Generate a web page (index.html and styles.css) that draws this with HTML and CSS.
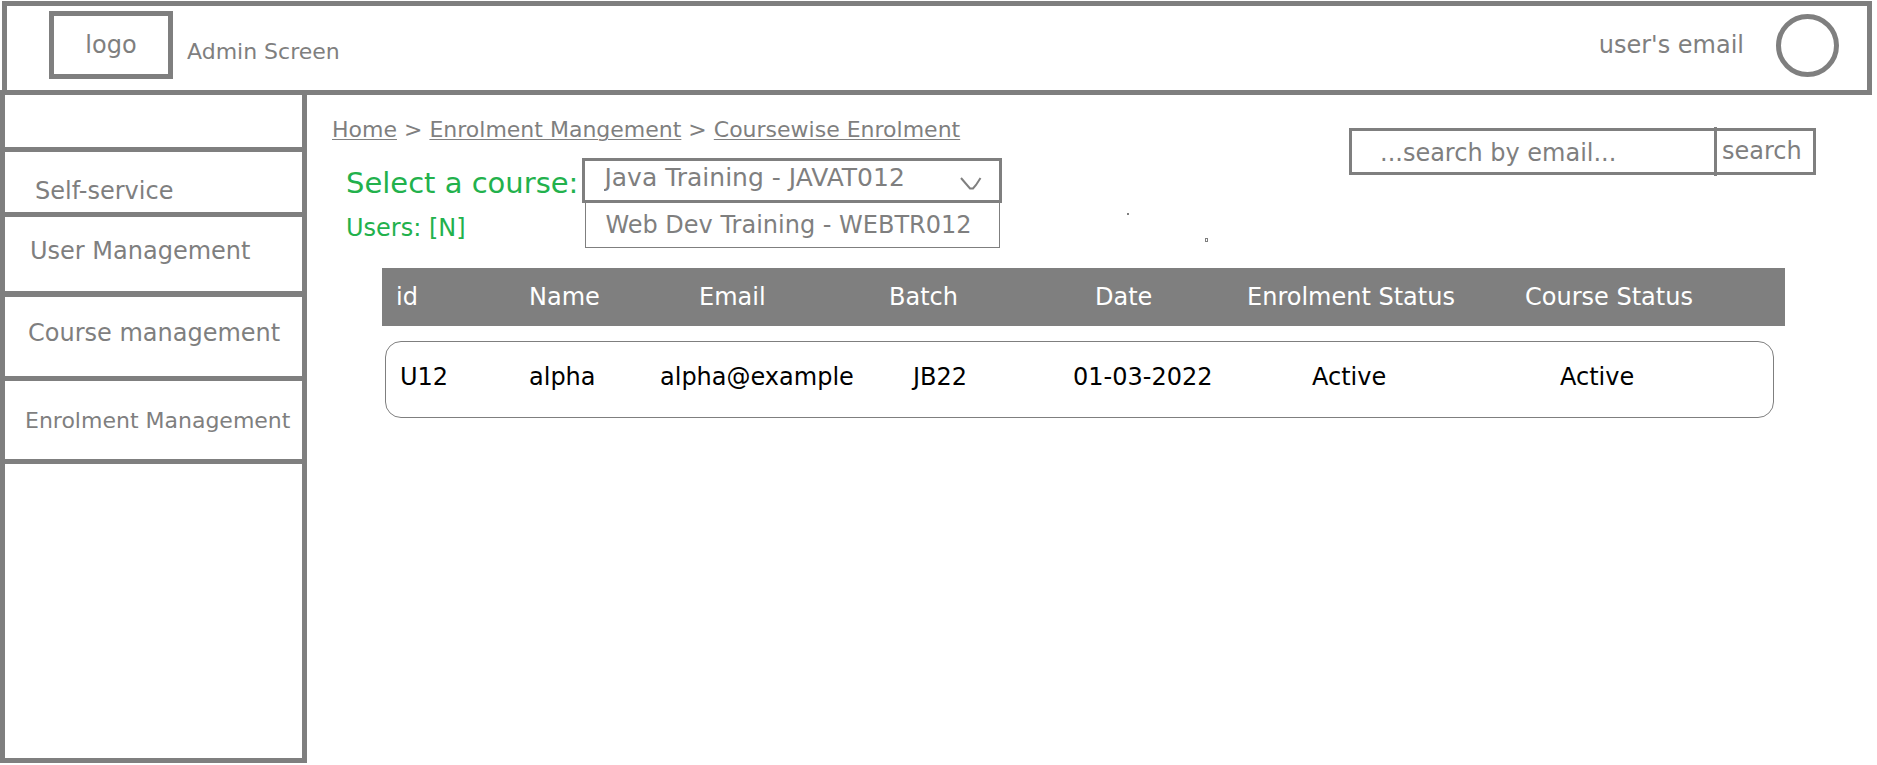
FILE: index.html
```html
<!DOCTYPE html>
<html lang="en">
<head>
<meta charset="utf-8">
<title>Admin Screen</title>
<link rel="stylesheet" href="styles.css">
</head>
<body>
<header class="topbar">
  <div class="logo">logo</div>
  <h1 class="title">Admin Screen</h1>
  <span class="user-email">user's email</span>
  <span class="avatar"></span>
</header>
<div class="layout">
  <nav class="sidebar">
    <div class="nav-spacer"></div>
    <a class="nav-item nav-self" href="#">Self-service</a>
    <a class="nav-item nav-users" href="#">User Management</a>
    <a class="nav-item nav-courses" href="#">Course management</a>
    <a class="nav-item nav-enrolment" href="#">Enrolment Management</a>
  </nav>
  <main class="content">
    <section class="toolbar">
      <div class="filters">
        <nav class="breadcrumb">
          <a href="#">Home</a><span>&gt;</span><a href="#">Enrolment Mangement</a><span>&gt;</span><a href="#">Coursewise Enrolment</a>
        </nav>
        <div class="course-picker">
          <label class="picker-label" for="course">Select a course:</label>
          <div class="select-wrap">
            <select id="course" class="select">
              <option>Java Training - JAVAT012</option>
              <option>Web Dev Training - WEBTR012</option>
            </select>
            <svg class="chevron" width="22" height="14" viewBox="0 0 22 14" fill="none" stroke="currentColor" stroke-width="2"><path d="M1 1 L10 11.500 H13 L16 8 L20.500 1"/></svg>
          </div>
          <p class="user-count">Users: [N]</p>
          <ul class="options" role="listbox" aria-label="Courses">
            <li role="option">Web Dev Training - WEBTR012</li>
          </ul>
        </div>
      </div>
      <svg class="marks" width="81" height="29" viewBox="0 0 81 29"><rect width="2" height="2" fill="currentColor"/><rect x="78.500" y="25.500" width="2" height="3" fill="none" stroke="currentColor"/></svg>
      <form class="search">
        <input class="search-input" type="text" aria-label="Search by email" placeholder="...search by email...">
        <button class="search-button" type="button">search</button>
      </form>
    </section>
    <table class="enrolments">
      <thead>
        <tr><th>id</th><th>Name</th><th>Email</th><th>Batch</th><th>Date</th><th>Enrolment Status</th><th>Course Status</th></tr>
      </thead>
      <tbody>
        <tr><td>U12</td><td>alpha</td><td>alpha@example</td><td>JB22</td><td>01-03-2022</td><td>Active</td><td>Active</td></tr>
      </tbody>
    </table>
  </main>
</div>
</body>
</html>
```
FILE: styles.css
```css
:root {
  --grey: #7f7f7f;
  --green: #22b14c;
}

* {
  box-sizing: border-box;
}

body {
  margin: 0;
  min-height: 100vh;
  padding: 1px 0 2px;
  display: flex;
  flex-direction: column;
  background: #fff;
  color: var(--grey);
  font: 24px/28px "DejaVu Sans", Verdana, sans-serif;
}

a {
  color: inherit;
}

.topbar {
  display: flex;
  align-items: center;
  margin: 0 5px 0 2px;
  padding: 5px 28px 11px 42px;
  border: 5px solid var(--grey);
}

.logo {
  display: flex;
  align-items: center;
  justify-content: center;
  width: 124px;
  height: 68px;
  border: 5px solid var(--grey);
}

.title {
  margin: 0 0 0 14px;
  padding-top: 14px;
  font-size: 22px;
  font-weight: normal;
}

.user-email {
  margin-left: auto;
}

.avatar {
  width: 63px;
  height: 63px;
  margin-left: 32px;
  border: 5px solid var(--grey);
  border-radius: 50%;
}

.layout {
  flex: 1;
  display: grid;
  grid-template-columns: 307px minmax(0, 1fr);
}

/* The sidebar shares its top edge with the bottom edge of the top bar. */
.sidebar {
  display: flex;
  flex-direction: column;
  margin-top: -5px;
  border: 5px solid var(--grey);
}

.nav-spacer {
  height: 57px;
  border-bottom: 5px solid var(--grey);
}

.nav-item {
  border-bottom: 5px solid var(--grey);
  text-decoration: none;
  white-space: nowrap;
}

.nav-self {
  padding: 25px 0 7px 30px;
}

.nav-users {
  padding: 20px 0 26px 25px;
  border-bottom-width: 6px;
}

.nav-courses {
  padding: 22px 0 29px 23px;
}

.nav-enrolment {
  padding: 26px 0 24px 20px;
  font-size: 22px;
}

.content {
  padding-top: 21px;
}

.toolbar {
  display: flex;
  align-items: flex-start;
  padding: 0 61px 0 25px;
}

.breadcrumb {
  display: flex;
  gap: 7px;
  font-size: 22px;
  white-space: nowrap;
}

.breadcrumb a {
  text-decoration-thickness: 1px;
  text-underline-offset: 2px;
}

.course-picker {
  display: grid;
  grid-template-columns: auto 420px;
  grid-auto-rows: 45px;
  align-items: center;
  column-gap: 4px;
  margin: 14px 0 0 14px;
}

.picker-label,
.user-count {
  margin: 0;
  padding-top: 4px;
  color: var(--green);
  white-space: nowrap;
}

.picker-label {
  font-size: 29px;
}

.select-wrap {
  position: relative;
  height: 100%;
}

.select {
  appearance: none;
  width: 100%;
  height: 100%;
  padding: 0 40px 6px 19px;
  border: 3px solid var(--grey);
  border-radius: 0;
  background: #fff;
  color: inherit;
  font: inherit;
  font-size: 25px;
}

.chevron {
  position: absolute;
  top: 19px;
  right: 20px;
  pointer-events: none;
}

.options {
  align-self: stretch;
  display: grid;
  align-items: center;
  margin: 0 2px 0 3px;
  padding: 0 0 0 19px;
  border: 1px solid var(--grey);
  border-top: 0;
  list-style: none;
  white-space: nowrap;
}

.marks {
  flex: none;
  margin: 97px 0 0 125px;
}

.search {
  display: flex;
  width: 467px;
  height: 47px;
  margin: 12px 0 0 auto;
  border: 3px solid var(--grey);
}

.search-input {
  flex: 1;
  min-width: 0;
  padding: 2px 0 0 28px;
  border: 0;
  background: none;
  color: inherit;
  font: inherit;
}

.search-input::placeholder {
  color: inherit;
  opacity: 1;
}

.search-button {
  position: relative;
  width: 99px;
  padding: 0 0 1px 8px;
  border: 0;
  background: none;
  color: inherit;
  font: inherit;
  text-align: left;
}

/* Divider that runs slightly past the frame of the search box. */
.search-button::before {
  content: "";
  position: absolute;
  top: -4px;
  bottom: -4px;
  left: 0;
  width: 3px;
  background: var(--grey);
}

.enrolments {
  display: block;
  margin: 20px 92px 0 75px;
}

.enrolments thead,
.enrolments tbody {
  display: block;
}

.enrolments tr {
  display: grid;
  align-items: center;
}

.enrolments th,
.enrolments td {
  min-width: 0;
  padding: 0;
  font-weight: normal;
  text-align: left;
  white-space: nowrap;
}

.enrolments thead tr {
  grid-template-columns: 133fr 170fr 190fr 206fr 152fr 278fr 260fr;
  padding: 15px 0 15px 14px;
  background: var(--grey);
  color: #fff;
}

.enrolments tbody tr {
  grid-template-columns: 129fr 131fr 253fr 160fr 239fr 248fr 213fr;
  margin: 15px 11px 0 3px;
  padding: 21px 0 26px 14px;
  border: 1px solid var(--grey);
  border-radius: 16px;
  color: #000;
}
```
